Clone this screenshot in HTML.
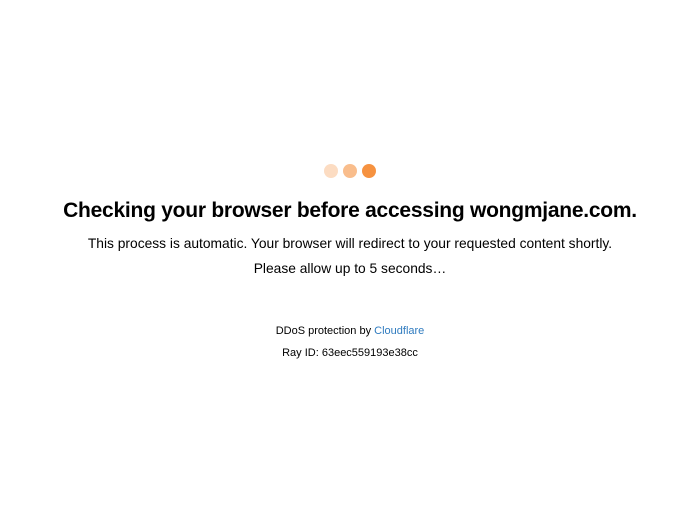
<!DOCTYPE html>
<html><head><style>
body{margin:0;width:700px;height:525px;background:#fff;font-family:"Liberation Sans",sans-serif;color:#000;}
.dots{position:absolute;top:164px;left:324px;}
.dots span{position:absolute;width:14px;height:14px;border-radius:50%;top:0}
h1{position:absolute;top:199px;left:0;width:700px;text-align:center;margin:0;font-size:21px;font-weight:bold;letter-spacing:-0.25px;white-space:nowrap}
.p{position:absolute;left:0;width:700px;text-align:center;font-size:13.8px;white-space:nowrap}
.s{position:absolute;left:0;width:700px;text-align:center;font-size:11px;white-space:nowrap}
a{color:#2f7bbf;text-decoration:none}
</style></head><body>
<div class="dots"><span style="left:0;background:#fcdcc2"></span><span style="left:19px;background:#f9bd8c"></span><span style="left:38px;background:#f69240"></span></div>
<h1>Checking your browser before accessing wongmjane.com.</h1>
<div class="p" style="top:236px">This process is automatic. Your browser will redirect to your requested content shortly.</div>
<div class="p" style="top:261px">Please allow up to 5 seconds…</div>
<div class="s" style="top:325px">DDoS protection by <a>Cloudflare</a></div>
<div class="s" style="top:347px">Ray ID: 63eec559193e38cc</div>
</body></html>
